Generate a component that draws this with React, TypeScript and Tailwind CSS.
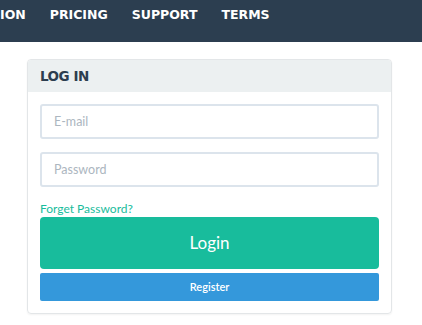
import React from "react";

export default function App() {
  return (
    <div className="w-[422px] h-[325px] bg-white overflow-hidden" style={{ fontFamily: "Lato, 'Open Sans', sans-serif" }}>
      <nav className="h-[42px] bg-[#2c3e50] flex items-start overflow-hidden">
        <div
          className="flex gap-[24px] pt-[9px] text-white font-bold text-[12.5px] leading-[12px] whitespace-nowrap"
          style={{ fontFamily: "'DejaVu Sans', sans-serif" }}
        >
          <span>ION</span>
          <span>PRICING</span>
          <span>SUPPORT</span>
          <span>TERMS</span>
        </div>
      </nav>
      <div className="ml-[27px] mt-[17px] w-[365px] border border-[#e3e6e8] rounded-[4px] shadow-[0_1px_2px_rgba(0,0,0,0.05)] overflow-hidden">
        <div className="h-[32px] bg-[#ecf0f1] flex items-center px-[12px]">
          <span
            className="text-[#2c3e50] font-bold text-[13.5px] tracking-[-0.5px]"
            style={{ fontFamily: "'DejaVu Sans', sans-serif" }}
          >
            LOG IN
          </span>
        </div>
        <div className="px-[12px] pt-[12px] pb-[12px] flex flex-col">
          <input
            className="h-[35px] w-full border-2 border-[#dce4ec] rounded-[3px] px-[12px] text-[12.5px] text-[#2c3e50] placeholder:text-[#acb6c0] outline-none"
            placeholder="E-mail"
          />
          <input
            className="mt-[13px] h-[35px] w-full border-2 border-[#dce4ec] rounded-[3px] px-[12px] text-[12.5px] text-[#2c3e50] placeholder:text-[#acb6c0] outline-none"
            placeholder="Password"
            type="password"
          />
          <a className="mt-[13px] text-[12px] leading-[17px] text-[#18bc9c] self-start">Forget Password?</a>
          <button className="h-[52px] w-full bg-[#18bc9c] text-white text-[17px] rounded-[4px] flex items-center justify-center">
            Login
          </button>
          <button className="mt-[4px] h-[28px] w-full bg-[#3498db] text-white text-[11px] font-semibold rounded-[2px] flex items-center justify-center">
            Register
          </button>
        </div>
      </div>
    </div>
  );
}
